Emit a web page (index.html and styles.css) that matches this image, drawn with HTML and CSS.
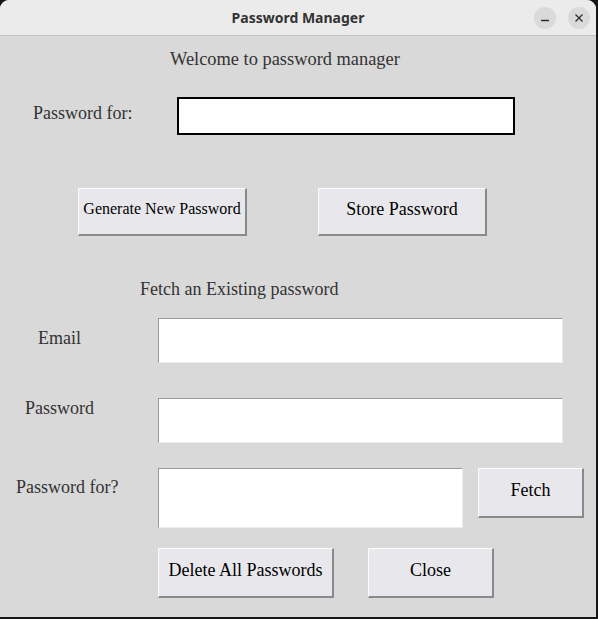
FILE: index.html
```html
<!DOCTYPE html>
<html>
<head>
<meta charset="utf-8">
<title>Password Manager</title>
<link rel="stylesheet" href="styles.css">
</head>
<body>
<div class="window">
  <div class="titlebar">
    <div></div>
    <div class="title">Password Manager</div>
    <div class="controls">
      <span class="ctl"><svg width="10" height="10" viewBox="0 0 10 10"><path d="M1 7.5H9" stroke="#2e2e2e" stroke-width="1.3"/></svg></span>
      <span class="ctl"><svg width="10" height="10" viewBox="0 0 10 10"><path d="M1.5 1.5L8.5 8.5M8.5 1.5L1.5 8.5" stroke="#2e2e2e" stroke-width="1.3"/></svg></span>
    </div>
  </div>
  <div class="content">
    <div class="row welcome">Welcome to password manager</div>
    <div class="row r-site">
      <div class="label l-site">Password for:</div>
      <div class="entry entry-focus"></div>
    </div>
    <div class="row r-actions">
      <div class="btn btn-gen">Generate New Password</div>
      <div class="btn btn-store">Store Password</div>
    </div>
    <div class="row fetch-head">Fetch an Existing password</div>
    <div class="row r-email">
      <div class="label l-email">Email</div>
      <div class="entry entry-wide"></div>
    </div>
    <div class="row r-pass">
      <div class="label l-pass">Password</div>
      <div class="entry entry-wide"></div>
    </div>
    <div class="row r-for">
      <div class="label l-for">Password for?</div>
      <div class="entry entry-for"></div>
      <div class="btn btn-fetch">Fetch</div>
    </div>
    <div class="row r-bottom">
      <div class="btn btn-delete">Delete All Passwords</div>
      <div class="btn btn-close">Close</div>
    </div>
  </div>
</div>
</body>
</html>
```
FILE: styles.css
```css
html, body {
  margin: 0;
  padding: 0;
  background: #161616;
  width: 598px;
  height: 619px;
  overflow: hidden;
}
.window {
  width: 596px;
  height: 617px;
  background: #d9d9d9;
  border-radius: 9px 9px 0 0;
  overflow: hidden;
}
.titlebar {
  height: 35px;
  background: #ebebeb;
  border-bottom: 1px solid #c3c3c3;
  display: grid;
  grid-template-columns: 1fr auto 1fr;
  align-items: center;
}
.title {
  font-family: "Noto Sans", sans-serif;
  font-weight: 700;
  font-size: 14px;
  color: #333;
}
.controls {
  display: flex;
  justify-content: flex-end;
  gap: 12px;
  padding-right: 6px;
}
.ctl {
  width: 22px;
  height: 22px;
  border-radius: 50%;
  background: #dadada;
  display: flex;
  align-items: center;
  justify-content: center;
}
.content {
  font-family: "Liberation Serif", "Times New Roman", serif;
  font-size: 18px;
  line-height: 20px;
  color: #333;
}
.row {
  display: flex;
  align-items: flex-start;
}
.welcome {
  margin-top: 13px;
  padding-left: 170px;
  font-size: 18.4px;
}
.r-site {
  margin-top: 28px;
}
.label {
  box-sizing: border-box;
  flex: none;
}
.l-site { width: 177px; padding-left: 33px; margin-top: 6px; }
.entry {
  box-sizing: border-box;
  background: #fff;
  border: 1px solid;
  border-color: #9a9a9a #ededed #ededed #9a9a9a;
  flex: none;
}
.entry-focus {
  width: 338px;
  height: 38px;
  border: 2px solid #000;
}
.r-actions {
  margin-top: 53px;
  padding-left: 78px;
  gap: 71px;
}
.btn {
  box-sizing: border-box;
  flex: none;
  background: #e8e8ec;
  border-style: solid;
  border-width: 1px 2px 2px 1px;
  border-color: #fcfcfc #8a8a8a #8a8a8a #fcfcfc;
  color: #000;
  display: flex;
  align-items: center;
  justify-content: center;
  padding-bottom: 5px;
}
.btn-gen { width: 169px; height: 48px; font-size: 16px; padding-bottom: 6px; }
.btn-store { width: 169px; height: 48px; }
.fetch-head {
  margin-top: 43px;
  padding-left: 140px;
}
.r-email { margin-top: 19px; }
.l-email { width: 158px; padding-left: 38px; margin-top: 10px; }
.entry-wide { width: 405px; height: 45px; }
.r-pass { margin-top: 35px; }
.l-pass { width: 158px; padding-left: 25px; margin-top: 0; }
.r-for { margin-top: 25px; }
.l-for { width: 158px; padding-left: 16px; margin-top: 9px; }
.entry-for { width: 305px; height: 60px; }
.btn-fetch { width: 106px; height: 50px; margin-left: 15px; }
.r-bottom {
  margin-top: 20px;
  padding-left: 158px;
  gap: 34px;
}
.btn-delete { width: 176px; height: 50px; }
.btn-close { width: 126px; height: 50px; }
```
